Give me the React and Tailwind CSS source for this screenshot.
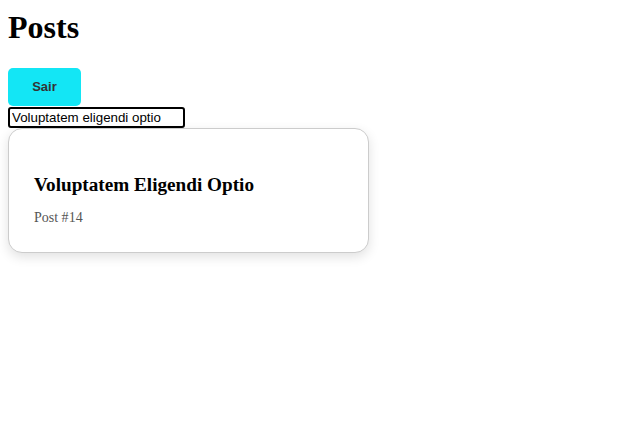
import React from 'react'

function PostCard({ title, id }) {
  return (
    <div className="w-[361px] rounded-[14px] border border-[#cccccc] bg-white px-[25px] pt-[45px] pb-[26px] shadow-[0_4px_12px_rgba(0,0,0,0.12)]">
      <h3 className="text-[19.2px] font-bold leading-[22px] text-black">{title}</h3>
      <p className="mt-[14px] text-[14px] leading-[16px] text-[#555555]">Post #{id}</p>
    </div>
  )
}

export default function App() {
  return (
    <div className="min-h-screen bg-white px-2 pt-[9px] font-['Liberation_Serif',serif]">
      <h1 className="text-[32px] font-bold leading-[36px] text-black">Posts</h1>
      <button className="mt-[23px] block h-[38px] w-[73px] rounded-[5px] bg-[#13e6f5] font-['Liberation_Sans',sans-serif] text-[13px] font-bold text-[#333333]">
        Sair
      </button>
      <input
        className="mt-[1px] block h-[21px] w-[177px] rounded-[3px] border-2 border-black px-[2px] font-['Liberation_Sans',sans-serif] text-[13.33px] text-black outline-none"
        defaultValue="Voluptatem eligendi optio"
        spellCheck={false}
      />
      <PostCard title="Voluptatem Eligendi Optio" id={14} />
    </div>
  )
}
